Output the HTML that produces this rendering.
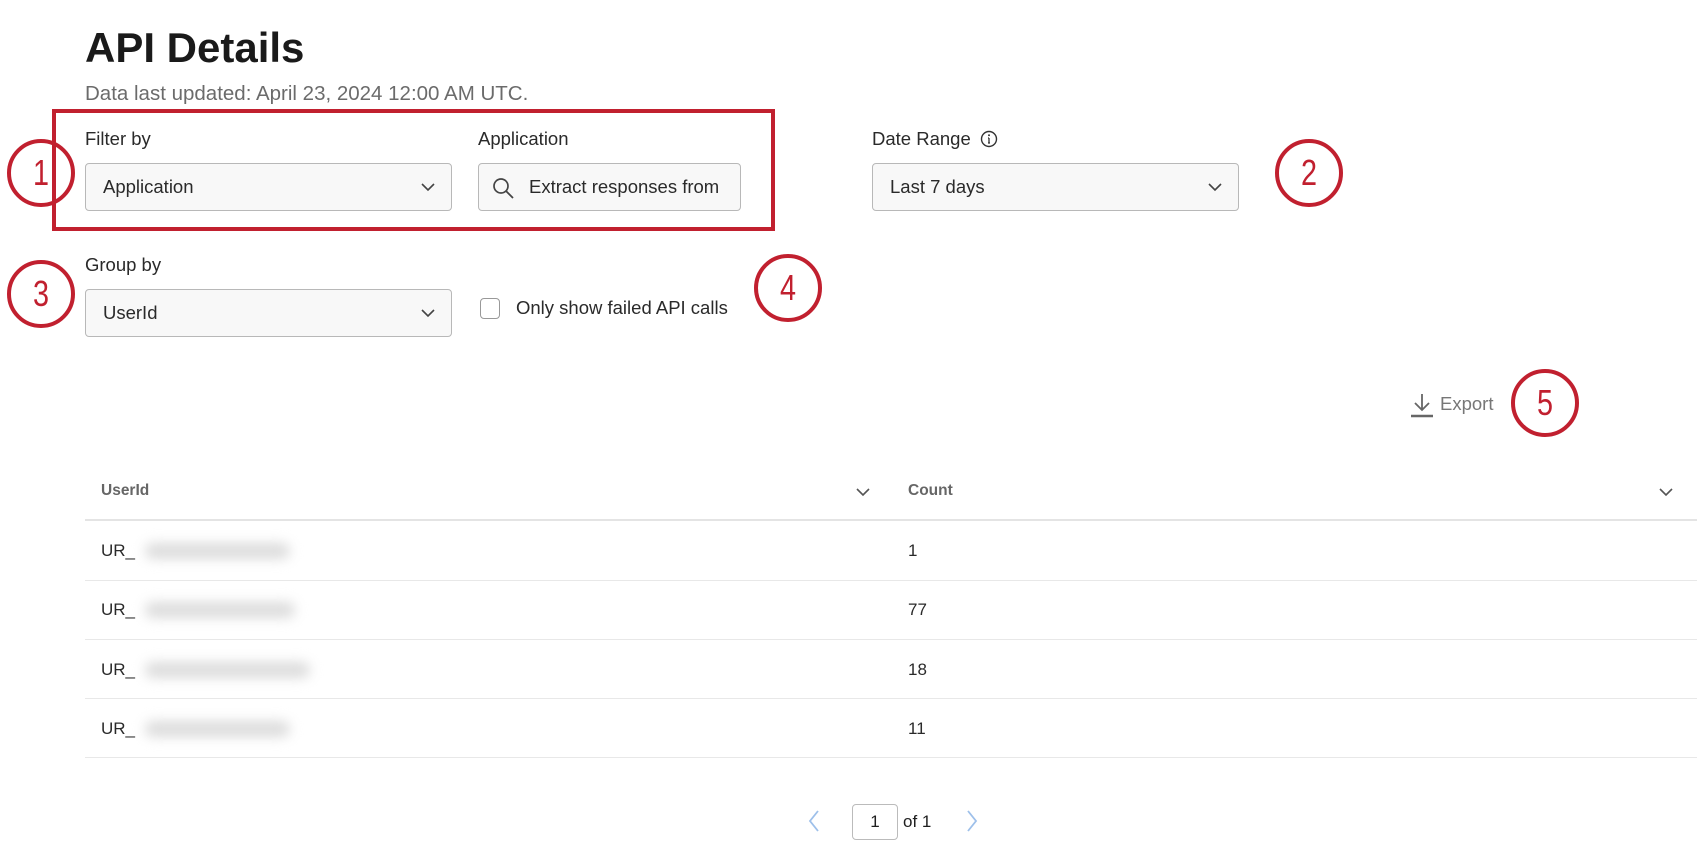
<!DOCTYPE html>
<html><head><meta charset="utf-8"><style>
*{box-sizing:border-box;margin:0;padding:0}
body{width:1700px;height:850px;background:#fff;font-family:"Liberation Sans",sans-serif;color:#1f1f1f;position:relative;overflow:hidden}
.a{position:absolute}
.lbl{font-size:18.5px;color:#2a2a2a}
.sel{position:absolute;background:#f8f8f8;border:1px solid #b8b8b8;border-radius:4px;height:48px;font-size:18.5px;color:#2a2a2a;padding-left:17px;line-height:46px}
.chev{position:absolute;right:16px;top:17px}
.circ{position:absolute;width:68px;height:68px;border:4px solid #c1202f;border-radius:50%;color:#c1202f;font-size:36px;text-align:center;line-height:60px}
.circ span{display:inline-block;transform:scaleX(0.8)}
.row{position:absolute;left:85px;width:1612px;border-bottom:1px solid #e8e8e8}
.cell{position:absolute;font-size:17px;color:#2a2a2a}
.blur{position:absolute;height:16px;background:#dcdcdc;filter:blur(6px);border-radius:8px}
</style></head><body>
<div class="a" style="left:85px;top:24px;font-size:42px;font-weight:bold;color:#1a1a1a">API Details</div>
<div class="a" style="left:85px;top:82px;font-size:20.5px;color:#6b6b6b">Data last updated: April 23, 2024 12:00 AM UTC.</div>

<div class="a" style="left:52px;top:109px;width:723px;height:122px;border:4px solid #c1202f"></div>
<div class="a lbl" style="left:85px;top:128px">Filter by</div>
<div class="a lbl" style="left:478px;top:128px">Application</div>
<div class="sel" style="left:85px;top:163px;width:367px">Application<svg class="chev" width="14" height="12" viewBox="0 0 14 12"><path d="M1 3l6 6 6-6" fill="none" stroke="#444" stroke-width="1.6"/></svg></div>
<div class="sel" style="left:478px;top:163px;width:263px;padding-left:50px">Extract responses from<svg class="a" style="left:12px;top:12px" width="24" height="24" viewBox="0 0 24 24"><circle cx="10" cy="10" r="7" fill="none" stroke="#444" stroke-width="1.7"/><path d="M15 15l7 7" stroke="#444" stroke-width="1.8"/></svg></div>

<div class="a lbl" style="left:872px;top:128px">Date Range</div>
<svg class="a" style="left:980px;top:130px" width="18" height="18" viewBox="0 0 18 18"><circle cx="9" cy="9" r="7.5" fill="none" stroke="#333" stroke-width="1.4"/><path d="M9 8v5M8 8h1M8 13h2" stroke="#333" stroke-width="1.3" fill="none"/><circle cx="9" cy="5.3" r="1" fill="#333"/></svg>
<div class="sel" style="left:872px;top:163px;width:367px">Last 7 days<svg class="chev" width="14" height="12" viewBox="0 0 14 12"><path d="M1 3l6 6 6-6" fill="none" stroke="#444" stroke-width="1.6"/></svg></div>

<div class="a lbl" style="left:85px;top:254px">Group by</div>
<div class="sel" style="left:85px;top:289px;width:367px">UserId<svg class="chev" width="14" height="12" viewBox="0 0 14 12"><path d="M1 3l6 6 6-6" fill="none" stroke="#444" stroke-width="1.6"/></svg></div>
<div class="a" style="left:480px;top:298px;width:20px;height:21px;border:1.5px solid #999;border-radius:4px;background:#fff"></div>
<div class="a lbl" style="left:516px;top:297px">Only show failed API calls</div>

<div class="circ" style="left:7px;top:139px"><span>1</span></div>
<div class="circ" style="left:1275px;top:139px"><span>2</span></div>
<div class="circ" style="left:7px;top:260px"><span>3</span></div>
<div class="circ" style="left:754px;top:254px"><span>4</span></div>
<div class="circ" style="left:1511px;top:369px"><span>5</span></div>

<svg class="a" style="left:1410px;top:392px" width="24" height="26" viewBox="0 0 24 26"><path d="M12 2v16M5 11l7 7 7-7" fill="none" stroke="#666" stroke-width="1.8"/><path d="M1 24h22" stroke="#666" stroke-width="2.5"/></svg>
<div class="a" style="left:1440px;top:393px;font-size:18.5px;color:#777">Export</div>

<div class="row" style="top:470px;height:51px;border-bottom:2px solid #e4e4e4"></div>
<div class="cell" style="left:101px;top:482px;font-size:15.5px;font-weight:bold;color:#666">UserId</div>
<svg class="a" style="left:856px;top:486px" width="14" height="12" viewBox="0 0 14 12"><path d="M1 3l6 6 6-6" fill="none" stroke="#555" stroke-width="1.6"/></svg>
<div class="cell" style="left:908px;top:482px;font-size:15.5px;font-weight:bold;color:#666">Count</div>
<svg class="a" style="left:1659px;top:486px" width="14" height="12" viewBox="0 0 14 12"><path d="M1 3l6 6 6-6" fill="none" stroke="#555" stroke-width="1.6"/></svg>

<div class="row" style="top:521px;height:60px"></div>
<div class="row" style="top:581px;height:59px"></div>
<div class="row" style="top:640px;height:59px"></div>
<div class="row" style="top:699px;height:59px"></div>

<div class="cell" style="left:101px;top:541px">UR_</div><div class="blur" style="left:145px;top:543px;width:145px"></div><div class="cell" style="left:908px;top:541px">1</div>
<div class="cell" style="left:101px;top:600px">UR_</div><div class="blur" style="left:145px;top:602px;width:150px"></div><div class="cell" style="left:908px;top:600px">77</div>
<div class="cell" style="left:101px;top:660px">UR_</div><div class="blur" style="left:145px;top:662px;width:165px"></div><div class="cell" style="left:908px;top:660px">18</div>
<div class="cell" style="left:101px;top:719px">UR_</div><div class="blur" style="left:145px;top:721px;width:145px"></div><div class="cell" style="left:908px;top:719px">11</div>

<svg class="a" style="left:808px;top:810px" width="12" height="22" viewBox="0 0 12 22"><path d="M10 1L2 11l8 10" fill="none" stroke="#9ec0ea" stroke-width="1.8"/></svg>
<div class="a" style="left:852px;top:804px;width:46px;height:36px;border:1px solid #bbb;border-radius:4px;text-align:center;line-height:34px;font-size:17px">1</div>
<div class="a" style="left:903px;top:812px;font-size:17px">of 1</div>
<svg class="a" style="left:966px;top:810px" width="12" height="22" viewBox="0 0 12 22"><path d="M2 1l8 10-8 10" fill="none" stroke="#9ec0ea" stroke-width="1.8"/></svg>
</body></html>
